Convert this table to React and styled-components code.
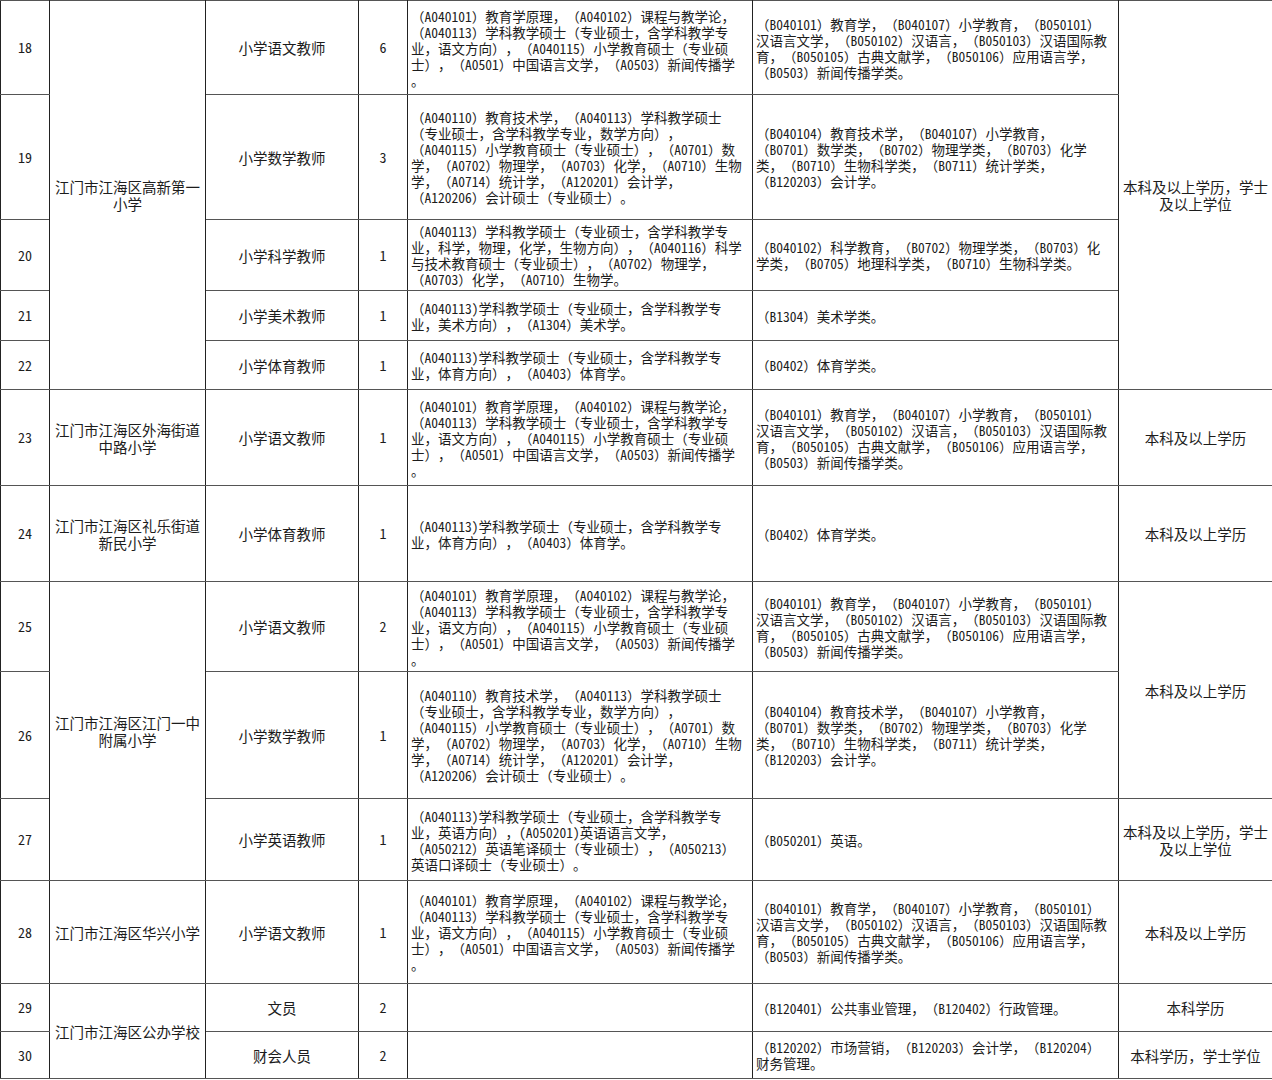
import React from "react"
import styled, { createGlobalStyle } from "styled-components"

const GlobalStyle = createGlobalStyle`
  html, body {
    margin: 0;
    padding: 0;
    background: #fff;
  }
  body {
    font-family: "Noto Sans Mono CJK SC", "Noto Sans CJK SC", sans-serif;
    color: #1c1c1c;
    text-spacing-trim: space-all;
  }
`

const Sheet = styled.table`
  width: 1272px;
  border-collapse: collapse;
  table-layout: fixed;
`
const Row = styled.tr`
  height: ${p => p.$h}px;
`
const Cell = styled.td`
  border-left: 1px solid #222;
  border-right: 1px solid #222;
  border-top: 1px solid #555;
  border-bottom: 1px solid #555;
  padding: 0;
  vertical-align: middle;
  text-align: center;
  font-size: 14.5px;
  line-height: 17px;
  white-space: pre;
  text-spacing-trim: space-all;
`
const Num = styled(Cell)`
  font-size: 14px;
`
const Major = styled(Cell)`
  text-align: left;
  padding-left: 3px;
  font-size: 13.5px;
  line-height: 16px;
`

const CN_A = `（A040101）教育学原理，（A040102）课程与教学论，
（A040113）学科教学硕士（专业硕士，含学科教学专
业，语文方向），（A040115）小学教育硕士（专业硕
士），（A0501）中国语言文学，（A0503）新闻传播学
。`
const CN_B = `（B040101）教育学，（B040107）小学教育，（B050101）
汉语言文学，（B050102）汉语言，（B050103）汉语国际教
育，（B050105）古典文献学，（B050106）应用语言学，
（B0503）新闻传播学类。`
const MATH_A = `（A040110）教育技术学，（A040113）学科教学硕士
（专业硕士，含学科教学专业，数学方向），
（A040115）小学教育硕士（专业硕士），（A0701）数
学，（A0702）物理学，（A0703）化学，（A0710）生物
学，（A0714）统计学，（A120201）会计学，
（A120206）会计硕士（专业硕士）。`
const MATH_B = `（B040104）教育技术学，（B040107）小学教育，
（B0701）数学类，（B0702）物理学类，（B0703）化学
类，（B0710）生物科学类，（B0711）统计学类，
（B120203）会计学。`
const SCI_A = `（A040113）学科教学硕士（专业硕士，含学科教学专
业，科学，物理，化学，生物方向），（A040116）科学
与技术教育硕士（专业硕士），（A0702）物理学，
（A0703）化学，（A0710）生物学。`
const SCI_B = `（B040102）科学教育，（B0702）物理学类，（B0703）化
学类，（B0705）地理科学类，（B0710）生物科学类。`
const ART_A = `（A040113)学科教学硕士（专业硕士，含学科教学专
业，美术方向），（A1304）美术学。`
const PE_A = `（A040113)学科教学硕士（专业硕士，含学科教学专
业，体育方向），（A0403）体育学。`
const PE_B = `（B0402）体育学类。`
const EN_A = `（A040113)学科教学硕士（专业硕士，含学科教学专
业，英语方向），(A050201)英语语言文学，
（A050212）英语笔译硕士（专业硕士），（A050213）
英语口译硕士（专业硕士）。`

const DEGREE = "本科及以上学历，学士\n及以上学位"
const BACHELOR = "本科及以上学历"

// school / edu: {text, span} only on the first row of a merged block
const rows = [
  { no: 18, h: 94, school: { text: "江门市江海区高新第一\n小学", span: 5 }, job: "小学语文教师", n: 6, a: CN_A, b: CN_B, edu: { text: DEGREE, span: 5 } },
  { no: 19, h: 125, job: "小学数学教师", n: 3, a: MATH_A, b: MATH_B },
  { no: 20, h: 71, job: "小学科学教师", n: 1, a: SCI_A, b: SCI_B },
  { no: 21, h: 50, job: "小学美术教师", n: 1, a: ART_A, b: "（B1304）美术学类。" },
  { no: 22, h: 49, job: "小学体育教师", n: 1, a: PE_A, b: PE_B },
  { no: 23, h: 96, school: { text: "江门市江海区外海街道\n中路小学", span: 1 }, job: "小学语文教师", n: 1, a: CN_A, b: CN_B, edu: { text: BACHELOR, span: 1 } },
  { no: 24, h: 96, school: { text: "江门市江海区礼乐街道\n新民小学", span: 1 }, job: "小学体育教师", n: 1, a: PE_A, b: PE_B, edu: { text: BACHELOR, span: 1 } },
  { no: 25, h: 90, school: { text: "江门市江海区江门一中\n附属小学", span: 3 }, job: "小学语文教师", n: 2, a: CN_A, b: CN_B, edu: { text: BACHELOR, span: 2 } },
  { no: 26, h: 127, job: "小学数学教师", n: 1, a: MATH_A, b: MATH_B },
  { no: 27, h: 82, job: "小学英语教师", n: 1, a: EN_A, b: "（B050201）英语。", edu: { text: DEGREE, span: 1 } },
  { no: 28, h: 103, school: { text: "江门市江海区华兴小学", span: 1 }, job: "小学语文教师", n: 1, a: CN_A, b: CN_B, edu: { text: BACHELOR, span: 1 } },
  { no: 29, h: 48, school: { text: "江门市江海区公办学校", span: 2 }, job: "文员", n: 2, a: "", b: "（B120401）公共事业管理，（B120402）行政管理。", edu: { text: "本科学历", span: 1 } },
  { no: 30, h: 47, job: "财会人员", n: 2, a: "", b: "（B120202）市场营销，（B120203）会计学，（B120204）\n财务管理。", edu: { text: "本科学历，学士学位", span: 1 } },
]

const widths = [49, 156, 153, 49, 345, 366, 154]

export default function App() {
  return (
    <>
      <GlobalStyle />
      <Sheet>
        <colgroup>
          {widths.map((w, i) => (
            <col key={i} style={{ width: w }} />
          ))}
        </colgroup>
        <tbody>
          {rows.map(r => (
            <Row key={r.no} $h={r.h}>
              <Num>{r.no}</Num>
              {r.school && <Cell rowSpan={r.school.span}>{r.school.text}</Cell>}
              <Cell>{r.job}</Cell>
              <Num>{r.n}</Num>
              <Major>{r.a}</Major>
              <Major>{r.b}</Major>
              {r.edu && <Cell rowSpan={r.edu.span}>{r.edu.text}</Cell>}
            </Row>
          ))}
        </tbody>
      </Sheet>
    </>
  )
}
